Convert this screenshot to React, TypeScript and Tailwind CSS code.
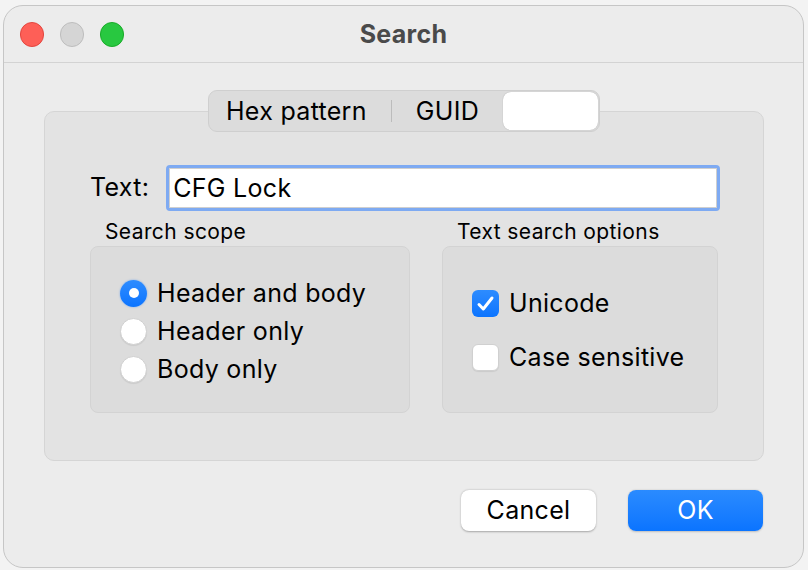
import { useState } from 'react';

const font = { fontFamily: 'Inter, "Noto Sans", "Liberation Sans", sans-serif' };

function Radio({ checked, label, onClick }: { checked: boolean; label: string; onClick: () => void }) {
  return (
    <button onClick={onClick} className="flex items-center gap-[10px] h-[38px] text-left">
      {checked ? (
        <span className="w-[27px] h-[27px] rounded-full bg-gradient-to-b from-[#2d8cff] to-[#0a74ff] flex items-center justify-center shadow-[0_0_2px_rgba(10,116,255,0.5)]">
          <span className="w-[10px] h-[10px] rounded-full bg-white" />
        </span>
      ) : (
        <span className="w-[27px] h-[27px] rounded-full bg-white border border-[#d0d0d0] shadow-[0_1px_1px_rgba(0,0,0,0.08)]" />
      )}
      <span className="text-[25px] tracking-[0.3px] text-black leading-none">{label}</span>
    </button>
  );
}

function Checkbox({ checked, label, onClick }: { checked: boolean; label: string; onClick: () => void }) {
  return (
    <button onClick={onClick} className="flex items-center gap-[10px] text-left">
      {checked ? (
        <span className="w-[27px] h-[27px] rounded-[6px] bg-gradient-to-b from-[#2d8cff] to-[#0a74ff] flex items-center justify-center">
          <svg width="19" height="17" viewBox="0 0 19 17" fill="none">
            <path d="M3 9.5 L7.3 14 L16 3" stroke="white" strokeWidth="3" strokeLinecap="round" strokeLinejoin="round" />
          </svg>
        </span>
      ) : (
        <span className="w-[27px] h-[27px] rounded-[6px] bg-white border border-[#d0d0d0] shadow-[0_1px_1px_rgba(0,0,0,0.08)]" />
      )}
      <span className="text-[25px] tracking-[0.3px] text-black leading-none">{label}</span>
    </button>
  );
}

export default function App() {
  const [scope, setScope] = useState('both');
  const [unicode, setUnicode] = useState(true);
  const [caseSensitive, setCaseSensitive] = useState(false);
  const [text, setText] = useState('CFG Lock');

  return (
    <div className="w-[808px] h-[570px] bg-[#f3f3f3] pt-[5px] pl-[3px]" style={font}>
      <div className="w-[801px] h-[563px] rounded-[20px] border border-[#c6c6c6] bg-[#ececec] flex flex-col overflow-hidden">
        {/* title bar */}
        <div className="h-[57px] shrink-0 border-b border-[#d3d3d3] grid grid-cols-[1fr_auto_1fr] items-center">
          <div className="flex items-center gap-[16px] pl-[16px] pt-[1px]">
            <span className="w-[24px] h-[25px] rounded-full bg-[#fe5f57] border border-[#e2463f]" />
            <span className="w-[24px] h-[25px] rounded-full bg-[#d5d5d5] border border-[#bdbdbd]" />
            <span className="w-[24px] h-[25px] rounded-full bg-[#28c840] border border-[#1aab29]" />
          </div>
          <div className="text-[25px] tracking-[0.3px] font-bold text-[#4a4a4a] leading-none">Search</div>
          <div />
        </div>

        {/* tab pane */}
        <div className="pl-[40px] pt-[27px]">
          <div className="flex justify-center w-[720px] relative z-10">
            <div className="flex items-center h-[42px] rounded-[9px] bg-[#dcdcdc] border border-[#cfcfcf] p-[1px] text-[25px] tracking-[0.3px] text-black">
              <span className="pl-[16px] pr-[24px] leading-none">Hex pattern</span>
              <span className="w-px h-[22px] bg-[#bcbcbc]" />
              <span className="pl-[24px] pr-[24px] leading-none">GUID</span>
              <span className="w-[95px] h-[38px] rounded-[8px] bg-white shadow-[0_0_1px_rgba(0,0,0,0.3)]" />
            </div>
          </div>
          <div className="-mt-[21px] w-[720px] h-[350px] rounded-[10px] bg-[#e3e3e3] border border-[#d5d5d5] pl-[45px] pr-[43px] pt-[53px]">
            <div className="flex items-center gap-[17px]">
              <span className="text-[25px] tracking-[0.3px] text-black">Text:</span>
              <div className="flex-1 h-[46px] rounded-[4px] border-[3px] border-[#7eaaf2] bg-white flex items-center">
                <input
                  value={text}
                  onChange={(e) => setText(e.target.value)}
                  className="w-full h-full bg-transparent outline-none border border-[#cfcfcf] px-[3px] text-[25px] tracking-[0.3px] text-black"
                  style={font}
                />
              </div>
            </div>

            <div className="flex gap-[32px] mt-[8px]">
              <div className="flex flex-col">
                <span className="text-[21px] tracking-[0.4px] text-black pl-[15px] leading-[26px]">Search scope</span>
                <div className="mt-[1px] w-[320px] h-[167px] rounded-[8px] bg-[#dcdcdc] border border-[#d3d3d3] pl-[29px] pt-[27px] flex flex-col">
                  <Radio checked={scope === 'both'} label="Header and body" onClick={() => setScope('both')} />
                  <Radio checked={scope === 'header'} label="Header only" onClick={() => setScope('header')} />
                  <Radio checked={scope === 'body'} label="Body only" onClick={() => setScope('body')} />
                </div>
              </div>
              <div className="flex flex-col">
                <span className="text-[21px] tracking-[0.4px] text-black pl-[15px] leading-[26px]">Text search options</span>
                <div className="mt-[1px] w-[276px] h-[167px] rounded-[8px] bg-[#dcdcdc] border border-[#d3d3d3] pl-[29px] pt-[43px] flex flex-col gap-[27px]">
                  <Checkbox checked={unicode} label="Unicode" onClick={() => setUnicode(!unicode)} />
                  <Checkbox checked={caseSensitive} label="Case sensitive" onClick={() => setCaseSensitive(!caseSensitive)} />
                </div>
              </div>
            </div>
          </div>
        </div>

        {/* buttons */}
        <div className="flex justify-end gap-[32px] pr-[40px] pt-[29px]">
          <button className="w-[135px] h-[41px] rounded-[8px] bg-white shadow-[0_0.5px_2px_rgba(0,0,0,0.3)] text-[25px] tracking-[0.3px] text-black">
            Cancel
          </button>
          <button className="w-[135px] h-[41px] rounded-[8px] bg-gradient-to-b from-[#2a8bff] to-[#0a74ff] shadow-[0_0.5px_2px_rgba(0,0,0,0.2)] text-[25px] tracking-[0.3px] text-white">
            OK
          </button>
        </div>
      </div>
    </div>
  );
}
